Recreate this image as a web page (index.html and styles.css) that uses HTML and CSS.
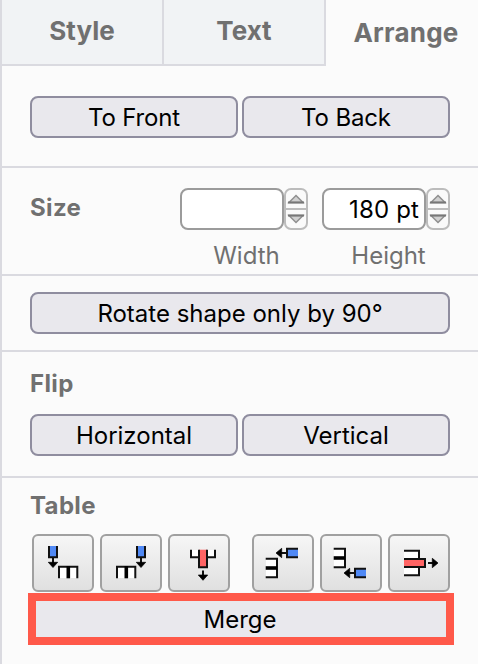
FILE: index.html
```html
<!DOCTYPE html>
<html lang="en">
<head>
<meta charset="utf-8">
<title>Format panel</title>
<link rel="stylesheet" href="styles.css">
</head>
<body>
<main class="panel">
  <nav class="tabs">
    <div class="tab"><span>Style</span></div>
    <div class="tab"><span>Text</span></div>
    <div class="tab active"><span>Arrange</span></div>
  </nav>
  <section class="section order">
    <div class="row">
      <button class="btn"><span class="tight">To Front</span></button>
      <button class="btn"><span class="tight">To Back</span></button>
    </div>
  </section>
  <section class="section size">
    <h2>Size</h2>
    <div class="field">
      <div class="control">
        <div class="input"></div>
        <div class="spinner">
          <svg viewBox="0 0 24 42"><path class="line" d="M1 21H23"/><path class="tri" d="M12 7.5L19 14.5H5ZM12 34.5L19 27.5H5Z"/><path class="edge" d="M4 14.5H20M4 27.5H20"/></svg>
        </div>
      </div>
      <span class="caption">Width</span>
    </div>
    <div class="field">
      <div class="control">
        <div class="input"><span class="value">180 pt</span></div>
        <div class="spinner">
          <svg viewBox="0 0 24 42"><path class="line" d="M1 21H23"/><path class="tri" d="M12 7.5L19 14.5H5ZM12 34.5L19 27.5H5Z"/><path class="edge" d="M4 14.5H20M4 27.5H20"/></svg>
        </div>
      </div>
      <span class="caption">Height</span>
    </div>
  </section>
  <section class="section rotate">
    <div class="row"><button class="btn"><span>Rotate shape only by 90°</span></button></div>
  </section>
  <section class="section flip">
    <h2>Flip</h2>
    <div class="row">
      <button class="btn"><span>Horizontal</span></button>
      <button class="btn"><span>Vertical</span></button>
    </div>
  </section>
  <section class="section table">
    <h2>Table</h2>
    <div class="tools">
      <div class="group">
        <button class="tool" aria-label="Insert column before"><svg viewBox="0 0 62 58">
          <path class="w" d="M27 32H46V44H27Z"/><path class="k" d="M27 44.3V32.7H45.3V44.3"/><path class="k4" d="M36.3 32V44.3"/>
          <path class="b" d="M17 12V23H25V12"/><path class="k" d="M17 12V23.3H25V12M21 24V29"/><path class="a" d="M16.3 28.3H25.7L21 33.5Z"/></svg></button>
        <button class="tool" aria-label="Insert column after"><svg viewBox="0 0 62 58">
          <path class="w" d="M17 32H36V44H17Z"/><path class="k" d="M17 44.3V32.7H35.3V44.3"/><path class="k4" d="M26.3 32V44.3"/>
          <path class="b" d="M37 12V23H45V12"/><path class="k" d="M37 12V23.3H45V12M41 24V29"/><path class="a" d="M36.3 28.3H45.7L41 33.5Z"/></svg></button>
        <button class="tool" aria-label="Delete column"><svg viewBox="0 0 62 58">
          <path class="w" d="M23 16H47V23H23Z"/><path class="k" d="M23 15.7V23.3H47V15.7"/>
          <path class="r" d="M31 15.7V33H39V15.7"/><path class="k" d="M31 15.7V33.3H39V15.7M35 36.5V42"/><path class="a" d="M30.3 41H39.7L35 46.3Z"/></svg></button>
      </div>
      <div class="group">
        <button class="tool" aria-label="Insert row before"><svg viewBox="0 0 62 58">
          <path class="w" d="M14 24H25V44H14Z"/><path class="k" d="M13.7 24.7H25V43.3H13.7"/><path class="k4" d="M13.7 34H25"/>
          <path class="b" d="M46 15H35V23.3H46"/><path class="k" d="M46 14.7H35V23.3H46M34 19H29"/><path class="a" d="M29.7 14.3V23.7L24 19Z"/></svg></button>
        <button class="tool" aria-label="Insert row after"><svg viewBox="0 0 62 58">
          <path class="w" d="M14 14H25V34H14Z"/><path class="k" d="M13.7 14.7H25V33.3H13.7"/><path class="k4" d="M13.7 24H25"/>
          <path class="b" d="M46 35H35V43.3H46"/><path class="k" d="M46 34.7H35V43.3H46M34 39H29"/><path class="a" d="M29.7 34.3V43.7L24 39Z"/></svg></button>
        <button class="tool" aria-label="Delete row"><svg viewBox="0 0 62 58">
          <path class="w" d="M16 17H31V41H16Z"/><path class="k" d="M16 16.7H31V41.3H16"/>
          <path class="r" d="M16 25H37V33H16"/><path class="k" d="M16 25H37V33H16M40 29H45"/><path class="a" d="M44.3 24.3V33.7L50 29Z"/></svg></button>
      </div>
    </div>
    <button class="merge"><span>Merge</span></button>
  </section>
</main>
</body>
</html>
```
FILE: styles.css
```css
* { box-sizing: border-box; }
body { margin: 0; background: #fbfbfb; font-family: Inter, "Liberation Sans", sans-serif; font-size: 24px; color: #000; overflow: hidden; }
.panel { width: 478px; height: 664px; border-left: 2px solid #dadae0; background: #fbfbfb; overflow: hidden; }
.tabs { display: flex; height: 66px; }
.tab { width: 162px; border-right: 2px solid #dadae0; border-bottom: 2px solid #dadae0; background: #f1f3f5; display: flex; align-items: center; justify-content: center; color: #707070; font-size: 26px; font-weight: 700; padding-bottom: 4px; }
.tab.active { width: 152px; border: 0; background: none; padding: 0 0 2px 8px; letter-spacing: .2px; }
span { white-space: nowrap; }
.section { border-bottom: 2px solid #dadae0; padding: 0 28px; }
h2 { margin: 0; font-size: 24px; line-height: 30px; font-weight: 700; color: #707070; letter-spacing: .35px; }
.row { display: flex; gap: 4px; }
.btn { flex: 1 1 0; height: 42px; padding: 2px 0 0; border: 2px solid #8f8d9f; border-radius: 8px; background: #e9e8ed; color: #000; font: inherit; line-height: 36px; }
.tight { letter-spacing: -.15px; }
.order { height: 102px; padding-top: 30px; }
.size { height: 108px; display: flex; justify-content: space-between; padding-top: 20px; }
.size h2 { width: 136px; padding-top: 5px; }
.field { width: 128px; flex: none; }
.control { display: flex; }
.input { width: 104px; height: 42px; background: #fff; border: 2px solid #9b9b9b; border-radius: 8px; padding-right: 5px; text-align: right; line-height: 40px; }
.value { letter-spacing: .15px; }
.spinner { width: 24px; height: 42px; border: 2px solid #bcbcbc; border-radius: 7px; background: #fafafa; }
.spinner svg { display: block; width: 24px; height: 42px; margin: -2px; }
.line { stroke: #bcbcbc; stroke-width: 2; }
.tri { fill: #d0d0d0; stroke: #909090; stroke-width: 1.5; }
.edge { stroke: #777; stroke-width: 1.8; }
.caption { display: block; color: #707070; text-align: center; line-height: 30px; margin-top: 11px; padding-left: 5px; }
.rotate { height: 76px; padding-top: 16px; }
.flip { height: 126px; padding-top: 17px; }
.flip .row { margin-top: 15px; }
.table { border: 0; padding: 13px 28px 0; }
.tools { display: flex; justify-content: space-between; margin-top: 13px; padding-left: 2px; }
.group { display: flex; gap: 6px; }
.tool { width: 62px; height: 58px; padding: 0; border: 2px solid #a0a0a0; border-radius: 6px; background: linear-gradient(#f6f6f6, #e0e0e0); }
.tool svg { display: block; width: 62px; height: 58px; margin: -2px; }
.k { fill: none; stroke: #111; stroke-width: 2; }
.k4 { stroke: #000; stroke-width: 3.6; }
.w { fill: #fff; }
.b { fill: #5089f5; }
.r { fill: #ff6464; }
.a { fill: #000; stroke: #000; stroke-width: .7; }
.merge { display: block; width: 426px; height: 52px; margin: 1px 0 0 -2px; padding: 2px 2px 0 0; border: 8px solid #ff594a; background: #e9e8ed; color: #000; font: inherit; line-height: 34px; }
```
